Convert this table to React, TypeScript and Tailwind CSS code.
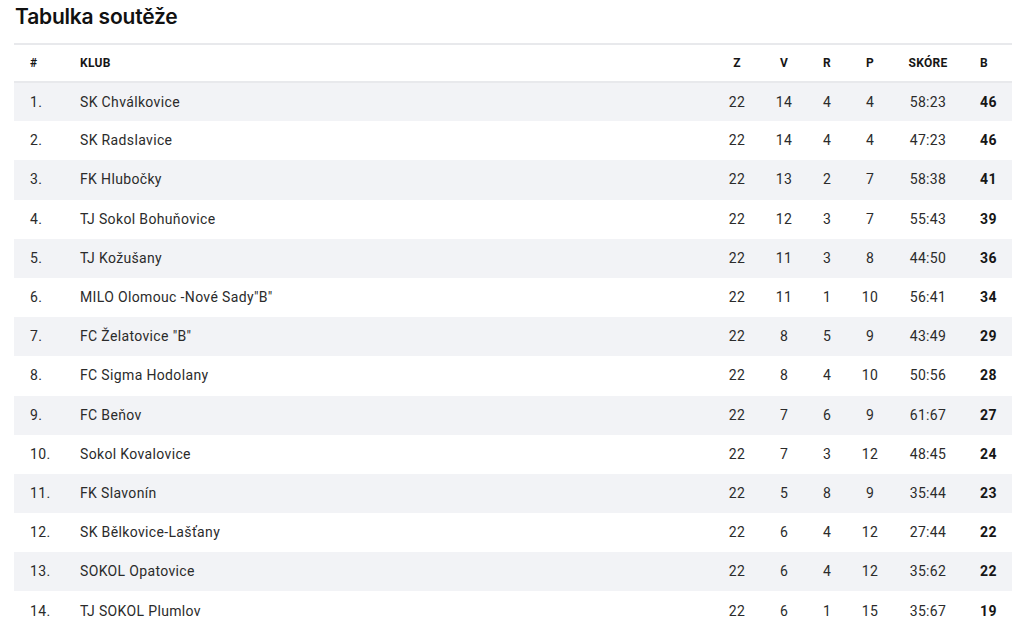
import React from 'react';

type Row = [string, number, number, number, number, string, number];

const rows: Row[] = [
  ['SK Chválkovice', 22, 14, 4, 4, '58:23', 46],
  ['SK Radslavice', 22, 14, 4, 4, '47:23', 46],
  ['FK Hlubočky', 22, 13, 2, 7, '58:38', 41],
  ['TJ Sokol Bohuňovice', 22, 12, 3, 7, '55:43', 39],
  ['TJ Kožušany', 22, 11, 3, 8, '44:50', 36],
  ['MILO Olomouc -Nové Sady"B"', 22, 11, 1, 10, '56:41', 34],
  ['FC Želatovice "B"', 22, 8, 5, 9, '43:49', 29],
  ['FC Sigma Hodolany', 22, 8, 4, 10, '50:56', 28],
  ['FC Beňov', 22, 7, 6, 9, '61:67', 27],
  ['Sokol Kovalovice', 22, 7, 3, 12, '48:45', 24],
  ['FK Slavonín', 22, 5, 8, 9, '35:44', 23],
  ['SK Bělkovice-Lašťany', 22, 6, 4, 12, '27:44', 22],
  ['SOKOL Opatovice', 22, 6, 4, 12, '35:62', 22],
  ['TJ SOKOL Plumlov', 22, 6, 1, 15, '35:67', 19],
];

const App: React.FC = () => {
  return (
    <div className="bg-white px-[14px] pt-[3px] font-['Roboto',sans-serif] text-[#2b2b2b]">
      <h1 className="mb-[13px] pl-px font-['Inter',sans-serif] text-[21px] leading-[27px] font-semibold tracking-[-0.2px] text-[#111]">
        Tabulka soutěže
      </h1>
      <table className="w-[998px] table-fixed border-collapse">
        <colgroup>
          <col className="w-[66px]" />
          <col />
          <col className="w-[50px]" />
          <col className="w-[44px]" />
          <col className="w-[42px]" />
          <col className="w-[44px]" />
          <col className="w-[72px]" />
          <col className="w-[48px]" />
        </colgroup>
        <thead>
          {/* header row */}
          <tr className="h-[38px] border-t-2 border-b-2 border-[#e8e9ec] text-[12px] font-bold tracking-[0.3px] text-[#161616]">
            <th className="pl-4 text-left">#</th>
            <th className="text-left">KLUB</th>
            <th className="text-center">Z</th>
            <th className="text-center">V</th>
            <th className="text-center">R</th>
            <th className="text-center">P</th>
            <th className="text-center">SKÓRE</th>
            <th className="pl-4 text-left">B</th>
          </tr>
        </thead>
        <tbody className="text-[14px] tracking-[0.35px]">
          {rows.map((r, i) => (
            <tr key={r[0]} className={`h-[39.2px] ${i % 2 === 0 ? 'bg-[#f2f3f6]' : 'bg-white'}`}>
              <td className="pl-4">{i + 1}.</td>
              <td>{r[0]}</td>
              <td className="text-center">{r[1]}</td>
              <td className="text-center">{r[2]}</td>
              <td className="text-center">{r[3]}</td>
              <td className="text-center">{r[4]}</td>
              <td className="text-center">{r[5]}</td>
              <td className="pl-4 font-bold text-[#161616]">{r[6]}</td>
            </tr>
          ))}
        </tbody>
      </table>
    </div>
  );
};

export default App;
